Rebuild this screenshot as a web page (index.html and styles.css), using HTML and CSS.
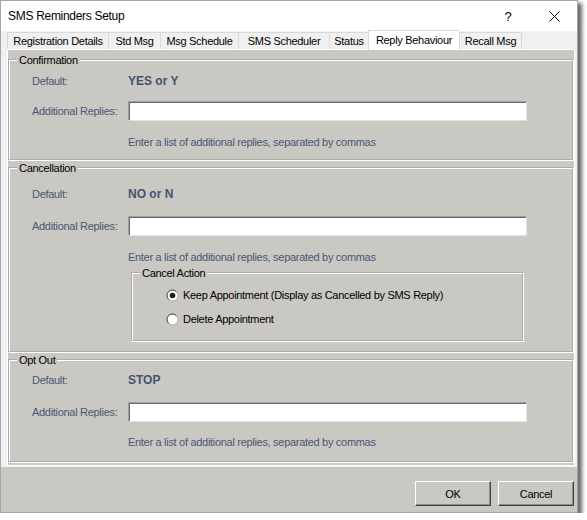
FILE: index.html
```html
<!DOCTYPE html>
<html>
<head>
<meta charset="utf-8">
<title>SMS Reminders Setup</title>
<link rel="stylesheet" href="styles.css">
</head>
<body>
<div class="window">
  <div class="titlebar">
    <span class="title">SMS Reminders Setup</span>
    <span class="tb-btn help">?</span>
    <span class="tb-btn close"><svg width="11" height="11" viewBox="0 0 11 11"><path d="M0.5 0.5L10.5 10.5M10.5 0.5L0.5 10.5" stroke="#111" stroke-width="1" fill="none"/></svg></span>
  </div>
  <div class="tabctl">
    <div class="tabs">
      <div class="tab t-reg">Registration Details</div>
      <div class="tab t-std">Std Msg</div>
      <div class="tab t-sched">Msg Schedule</div>
      <div class="tab t-smss">SMS Scheduler</div>
      <div class="tab t-status">Status</div>
      <div class="tab t-reply active">Reply Behaviour</div>
      <div class="tab t-recall">Recall Msg</div>
    </div>
    <div class="panel">
      <fieldset class="group g-confirm">
        <legend>Confirmation</legend>
        <div class="gbody">
          <div class="row r-default"><span class="lbl">Default:</span><span class="val">YES or Y</span></div>
          <div class="row r-input"><span class="lbl">Additional Replies:</span><span class="input"></span></div>
          <div class="row r-hint"><span class="lbl"></span><span class="hint">Enter a list of additional replies, separated by commas</span></div>
        </div>
      </fieldset>
      <fieldset class="group g-cancel">
        <legend>Cancellation</legend>
        <div class="gbody">
          <div class="row r-default"><span class="lbl">Default:</span><span class="val">NO or N</span></div>
          <div class="row r-input"><span class="lbl">Additional Replies:</span><span class="input"></span></div>
          <div class="row r-hint"><span class="lbl"></span><span class="hint">Enter a list of additional replies, separated by commas</span></div>
          <fieldset class="group sub">
            <legend>Cancel Action</legend>
            <div class="radio r-first">
              <svg width="13" height="13" viewBox="0 0 13 13"><circle cx="6.5" cy="6.5" r="5.5" fill="#fff" stroke="#a8a8a8"/><path d="M2.6 10.4A5.5 5.5 0 0 1 10.4 2.6" stroke="#4a4a4a" fill="none"/><circle cx="6.5" cy="6.5" r="2.8" fill="#1e1e1e"/></svg>
              <span>Keep Appointment (Display as Cancelled by SMS Reply)</span>
            </div>
            <div class="radio r-second">
              <svg width="13" height="13" viewBox="0 0 13 13"><circle cx="6.5" cy="6.5" r="5.5" fill="#fff" stroke="#a8a8a8"/><path d="M2.6 10.4A5.5 5.5 0 0 1 10.4 2.6" stroke="#4a4a4a" fill="none"/></svg>
              <span>Delete Appointment</span>
            </div>
          </fieldset>
        </div>
      </fieldset>
      <fieldset class="group g-opt">
        <legend>Opt Out</legend>
        <div class="gbody">
          <div class="row r-default"><span class="lbl">Default:</span><span class="val">STOP</span></div>
          <div class="row r-input"><span class="lbl">Additional Replies:</span><span class="input"></span></div>
          <div class="row r-hint"><span class="lbl"></span><span class="hint">Enter a list of additional replies, separated by commas</span></div>
        </div>
      </fieldset>
    </div>
  </div>
  <div class="footer">
    <button class="btn">OK</button>
    <button class="btn">Cancel</button>
  </div>
</div>
</body>
</html>
```
FILE: styles.css
```css
html, body {
  margin: 0;
  padding: 0;
  background: #ffffff;
}
body {
  font-family: "Liberation Sans", Arial, sans-serif;
  font-size: 11px;
  letter-spacing: -0.3px;
  color: #000;
}
.window {
  box-sizing: border-box;
  width: 578px;
  height: 513px;
  border: 1px solid #a6a6a6;
  background: #c9c8c2;
  display: flex;
  flex-direction: column;
  box-shadow: 4px 3px 4px rgba(0, 0, 0, 0.6);
}
.titlebar {
  height: 30px;
  background: #ffffff;
  display: flex;
  align-items: center;
}
.title {
  flex: 1;
  padding-left: 7px;
  font-size: 12px;
  letter-spacing: -0.3px;
}
.tb-btn {
  width: 46px;
  height: 30px;
  display: flex;
  align-items: center;
  justify-content: center;
}
.help {
  font-size: 13px;
  letter-spacing: 0;
}
.tabctl {
  background: #f0f0f0;
  padding: 0 2px 1px 6px;
}
.tabs {
  height: 18px;
  display: flex;
  align-items: flex-end;
}
.tab {
  box-sizing: border-box;
  height: 17px;
  border-top: 1px solid #d9d9d9;
  border-left: 1px solid #d9d9d9;
  background: #f0f0f0;
  text-align: center;
  line-height: 16px;
  white-space: nowrap;
}
.tab.active {
  background: #ffffff;
  height: 20px;
  margin-bottom: -1px;
  line-height: 18px;
  position: relative;
}
.t-recall { border-right: 1px solid #d9d9d9; }
.t-reg { width: 101px; }
.t-std { width: 52px; }
.t-sched { width: 78px; }
.t-smss { width: 91px; }
.t-status { width: 39px; }
.t-reply { width: 91px; }
.t-recall { width: 63px; }
.panel {
  border: 1px solid #ffffff;
  background: #c9c8c2;
  padding: 3px 0 2px 0;
}
.group {
  margin: 0;
  padding: 0;
  border: 2px groove #ffffff;
  min-width: 0;
}
.group legend {
  padding: 0 2px;
  margin-left: 7px;
  line-height: 14px;
  height: 14px;
  color: #000;
}
.gbody {
  padding-left: 22px;
}
.row {
  display: flex;
  align-items: center;
  height: 20px;
}
.lbl {
  width: 96px;
  flex: none;
  color: #4b5677;
}
.val {
  font-weight: bold;
  font-size: 12px;
  letter-spacing: 0;
  color: #465270;
}
.hint {
  color: #4b5677;
}
.input {
  box-sizing: border-box;
  width: 399px;
  height: 20px;
  background: #ffffff;
  border-top: 1px solid #a0a0a0;
  border-left: 1px solid #a0a0a0;
  border-right: 1px solid #e2e2e2;
  border-bottom: 1px solid #e2e2e2;
  box-shadow: inset 1px 1px 0 #6a6a6a;
}
.r-hint { height: 18px; }

.g-confirm .gbody { padding-bottom: 7px; }
.g-confirm .r-default { margin-top: 4px; }
.g-confirm .r-input { margin-top: 10px; }
.g-confirm .r-hint { margin-top: 11px; height: 20px; }

.g-cancel .gbody { padding-bottom: 9px; }
.g-cancel .r-default { margin-top: 9px; }
.g-cancel .r-input { margin-top: 12px; }
.g-cancel .r-hint { margin-top: 12px; }

.g-opt .gbody { padding-bottom: 10px; }
.g-opt .r-default { margin-top: 3px; }
.g-opt .r-input { margin-top: 12px; }
.g-opt .r-hint { margin-top: 11px; }

.sub {
  width: 393px;
  box-sizing: border-box;
  margin-left: 99px;
  padding: 0 0 11px 33px;
}
.sub legend {
  margin-left: -26px;
}
.radio {
  display: flex;
  align-items: center;
  height: 20px;
  gap: 4px;
}
.radio svg { flex: none; }
.r-first { margin-top: 5px; }
.r-second { margin-top: 4px; }

.footer {
  flex: 1;
  display: flex;
  justify-content: flex-end;
  align-items: flex-start;
  padding: 14px 3px 0 0;
  gap: 7px;
}
.btn {
  box-sizing: border-box;
  width: 76px;
  height: 25px;
  margin: 0;
  padding: 0;
  background: #c9c8c2;
  border-top: 1px solid #ffffff;
  border-left: 1px solid #ffffff;
  border-right: 1px solid #404040;
  border-bottom: 1px solid #404040;
  box-shadow: inset -1px -1px 0 #8c8c8c;
  font-family: "Liberation Sans", Arial, sans-serif;
  font-size: 11px;
  letter-spacing: -0.3px;
  color: #000;
}
```
